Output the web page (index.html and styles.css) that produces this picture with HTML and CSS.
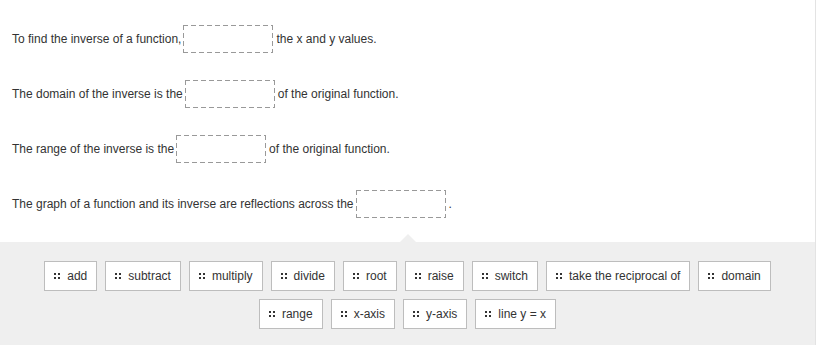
FILE: index.html
```
<!DOCTYPE html>
<html lang="en">
<head>
    <meta charset="UTF-8">
    <meta name="viewport" content="width=device-width, initial-scale=1.0">
    <title>Inverse Functions</title>
    <link rel="stylesheet" href="styles.css">
</head>
<body>
    <div class="question">
        <div class="statements">
            <div class="line">To find the inverse of a function,<span class="drop"></span>the x and y values.</div>
            <div class="line">The domain of the inverse is the<span class="drop"></span>of the original function.</div>
            <div class="line">The range of the inverse is the<span class="drop"></span>of the original function.</div>
            <div class="line">The graph of a function and its inverse are reflections across the<span class="drop"></span>.</div>
        </div>

        <div class="bank">
            <div class="chip"><i class="grip"></i>add</div>
            <div class="chip"><i class="grip"></i>subtract</div>
            <div class="chip"><i class="grip"></i>multiply</div>
            <div class="chip"><i class="grip"></i>divide</div>
            <div class="chip"><i class="grip"></i>root</div>
            <div class="chip"><i class="grip"></i>raise</div>
            <div class="chip"><i class="grip"></i>switch</div>
            <div class="chip"><i class="grip"></i>take the reciprocal of</div>
            <div class="chip"><i class="grip"></i>domain</div>
            <div class="chip"><i class="grip"></i>range</div>
            <div class="chip"><i class="grip"></i>x-axis</div>
            <div class="chip"><i class="grip"></i>y-axis</div>
            <div class="chip"><i class="grip"></i>line y = x</div>
        </div>
    </div>
</body>
</html>
```

FILE: styles.css
```
body {
    font-family: "Liberation Sans", Arial, sans-serif;
    font-size: 12px;
    color: #333;
    background: #fff;
    margin: 0;
    padding: 0;
}
.question {
    width: 815px;
    height: 345px;
    border-right: 1px solid #e3e3e3;
    display: flex;
    flex-direction: column;
}
.statements {
    padding: 25px 0 0 12px;
}
.line {
    display: flex;
    align-items: center;
    height: 28px;
    margin-bottom: 27px;
}
.line:last-child {
    margin-bottom: 24px;
}
/* dashed drop target, drawn with gradients for longer dashes */
.drop {
    display: inline-block;
    width: 90px;
    height: 28px;
    margin: 0 3px 0 2px;
    background:
        repeating-linear-gradient(90deg, #999 0 5px, transparent 5px 8px) left top / 100% 1px no-repeat,
        repeating-linear-gradient(90deg, #999 0 5px, transparent 5px 8px) left bottom / 100% 1px no-repeat,
        repeating-linear-gradient(180deg, #999 0 5px, transparent 5px 8px) left top / 1px 100% no-repeat,
        repeating-linear-gradient(180deg, #999 0 5px, transparent 5px 8px) right top / 1px 100% no-repeat;
}
.bank {
    position: relative;
    flex: 1;
    background: #efefef;
    display: flex;
    flex-wrap: wrap;
    justify-content: center;
    align-content: flex-start;
    gap: 8px;
    padding: 19px 30px 0;
}
.bank::before {
    content: "";
    position: absolute;
    top: -8px;
    left: 50%;
    margin-left: -8px;
    border-left: 8px solid transparent;
    border-right: 8px solid transparent;
    border-bottom: 8px solid #efefef;
}
.chip {
    display: flex;
    align-items: center;
    height: 28px;
    padding: 0 9px;
    background: #fff;
    border: 1px solid #bdbdbd;
    color: #333;
}
.grip {
    width: 6px;
    height: 6px;
    margin-right: 7px;
    background:
        linear-gradient(#333, #333) 0 0 / 2px 2px no-repeat,
        linear-gradient(#333, #333) 4px 0 / 2px 2px no-repeat,
        linear-gradient(#333, #333) 0 4px / 2px 2px no-repeat,
        linear-gradient(#333, #333) 4px 4px / 2px 2px no-repeat;
}
```
